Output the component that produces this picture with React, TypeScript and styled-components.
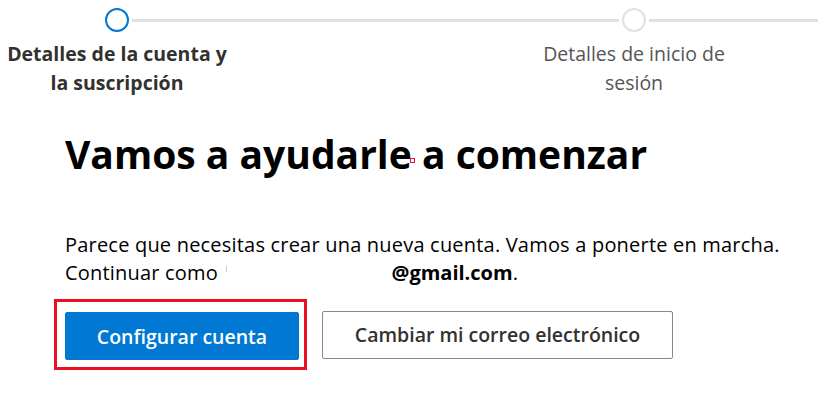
import React from "react";
import styled, { createGlobalStyle } from "styled-components";

const GlobalStyle = createGlobalStyle`
  html, body {
    margin: 0;
    padding: 0;
    background: #ffffff;
  }
  body {
    font-family: "Open Sans", "Noto Sans", "Liberation Sans", sans-serif;
    color: #000;
    overflow: hidden;
  }
`;

const Page = styled.div`
  width: 818px;
  height: 411px;
  position: relative;
`;

const Track = styled.div`
  display: flex;
  align-items: center;
  gap: 3px;
  padding: 8px 0 0 105px;
`;

const Circle = styled.div<{ $active?: boolean }>`
  width: 20px;
  height: 20px;
  border-radius: 50%;
  border: 2px solid ${({ $active }) => ($active ? "#0078d4" : "#e1e1e1")};
  flex: none;
`;

const Line = styled.div<{ $width?: number }>`
  height: 3px;
  background: #e1e1e1;
  flex: ${({ $width }) => ($width ? `0 0 ${$width}px` : "1")};
`;

const Labels = styled.div`
  display: flex;
  gap: 283px;
  margin-top: 7px;
`;

const StepLabel = styled.div<{ $active?: boolean }>`
  width: 234px;
  text-align: center;
  font-size: 19.5px;
  line-height: 29px;
  font-weight: ${({ $active }) => ($active ? 700 : 400)};
  color: ${({ $active }) => ($active ? "#323130" : "#555")};
`;

const Content = styled.div`
  padding: 0 0 0 65px;
`;

const Title = styled.h1`
  margin: 31px 0 0;
  font-size: 39px;
  line-height: 52px;
  font-weight: 700;
  color: #000;
  position: relative;
  display: inline-block;
`;

const Marker = styled.span`
  position: absolute;
  left: 345px;
  top: 30px;
  width: 3px;
  height: 3px;
  border: 1px solid #e81123;
  background: #fff;
`;

const Text = styled.p`
  margin: 51px 0 0;
  font-size: 20px;
  line-height: 28px;
  letter-spacing: 0.2px;
  color: #000;
`;

const Redacted = styled.span`
  display: inline-block;
  width: 168px;
  position: relative;

  &::before {
    content: "";
    position: absolute;
    left: 3px;
    top: -14px;
    width: 1px;
    height: 6px;
    background: #c8c8c8;
  }
`;

const Email = styled.b`
  font-weight: 700;
  letter-spacing: 0;
`;

const Actions = styled.div`
  display: flex;
  align-items: center;
  gap: 15px;
  margin: 12px 0 0 -11px;
`;

const Highlight = styled.div`
  border: 3px solid #e81123;
  padding: 10px 5px 7px 8px;
`;

const Button = styled.button<{ $primary?: boolean }>`
  height: 48px;
  padding: 0;
  font-family: inherit;
  font-size: 19.5px;
  font-weight: 600;
  border-radius: 2px;
  cursor: pointer;
  width: ${({ $primary }) => ($primary ? "234px" : "351px")};
  background: ${({ $primary }) => ($primary ? "#0078d4" : "#ffffff")};
  color: ${({ $primary }) => ($primary ? "#ffffff" : "#323130")};
  border: 1px solid ${({ $primary }) => ($primary ? "#0078d4" : "#8a8886")};
`;

export default function App() {
  return (
    <Page>
      <GlobalStyle />
      <Track>
        <Circle $active />
        <Line $width={487} />
        <Circle />
        <Line />
      </Track>
      <Labels>
        <StepLabel $active>
          Detalles de la cuenta y
          <br />
          la suscripción
        </StepLabel>
        <StepLabel>
          Detalles de inicio de
          <br />
          sesión
        </StepLabel>
      </Labels>
      <Content>
        <Title>
          Vamos a ayudarle a comenzar
          <Marker />
        </Title>
        <Text>
          Parece que necesitas crear una nueva cuenta. Vamos a ponerte en marcha.
          <br />
          Continuar como <Redacted />
          <Email>@gmail.com</Email>.
        </Text>
        <Actions>
          <Highlight>
            <Button $primary>Configurar cuenta</Button>
          </Highlight>
          <Button>Cambiar mi correo electrónico</Button>
        </Actions>
      </Content>
    </Page>
  );
}
